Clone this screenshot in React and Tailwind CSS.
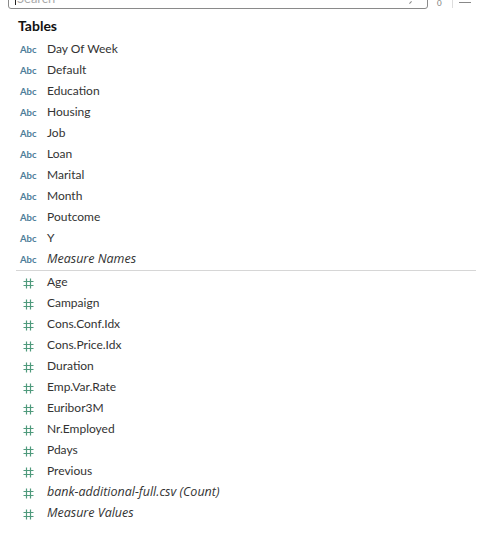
const dims = ["Day Of Week", "Default", "Education", "Housing", "Job", "Loan", "Marital", "Month", "Poutcome", "Y"];
const measures = ["Age", "Campaign", "Cons.Conf.Idx", "Cons.Price.Idx", "Duration", "Emp.Var.Rate", "Euribor3M", "Nr.Employed", "Pdays", "Previous"];

function Row({ icon, label, italic }) {
  return (
    <div className="flex h-[21px] items-baseline pl-[20px] pt-[3px] leading-[15px]">
      {icon === "abc" ? (
        <span className="w-[27px] text-[9.5px] font-bold text-[#4e7d99]">Abc</span>
      ) : (
        <span className="flex w-[27px] self-center pl-[3px]">
          <svg width="11" height="11" viewBox="0 0 11 11" fill="none" stroke="#4f9a7c" strokeWidth="1.2">
            <path d="M3.5 0.5V10.5M7.5 0.5V10.5M0.5 3.5H10.5M0.5 7.5H10.5" />
          </svg>
        </span>
      )}
      {italic ? (
        <span className="font-['Open_Sans',sans-serif] text-[12.5px] italic text-[#333]">{label}</span>
      ) : (
        <span className="text-[12px] text-[#333]">{label}</span>
      )}
    </div>
  );
}

export default function App() {
  return (
    <div className="h-[533px] w-[482px] overflow-hidden bg-white font-['Lato',sans-serif]">
      <div className="flex items-start pl-[8px] pr-[4px]">
        <div className="relative -mt-[16px] flex h-[25px] w-[420px] items-end rounded-[3px] border border-[#8a8a8a] pb-[3px] pl-[6px]">
          <span className="h-[14px] w-px bg-[#222]" />
          <span className="ml-[1px] text-[13px] leading-[14px] text-[#aaa]">Search</span>
          <span className="absolute bottom-[4px] right-[16px] h-[3px] w-px rotate-45 bg-[#888]" />
        </div>
        <span className="ml-[9px] text-[8px] leading-[6px] text-[#777]">0</span>
        <span className="ml-[10px] h-[8px] w-px bg-[#ddd]" />
        <span className="ml-[6px] mt-[1px] h-[2px] w-[12px] border-b border-[#888]" />
      </div>
      <div className="pl-[18px] pt-[7px] text-[14px] font-bold leading-[20px] text-[#111]">Tables</div>
      <div className="mt-[2px]">
        {dims.map((d) => (
          <Row key={d} icon="abc" label={d} />
        ))}
        <Row icon="abc" label="Measure Names" italic />
      </div>
      <div className="ml-[16px] mr-[6px] mt-[1px] border-t border-[#d6d6d6]" />
      <div>
        {measures.map((m) => (
          <Row key={m} icon="hash" label={m} />
        ))}
        <Row icon="hash" label="bank-additional-full.csv (Count)" italic />
        <Row icon="hash" label="Measure Values" italic />
      </div>
    </div>
  );
}
